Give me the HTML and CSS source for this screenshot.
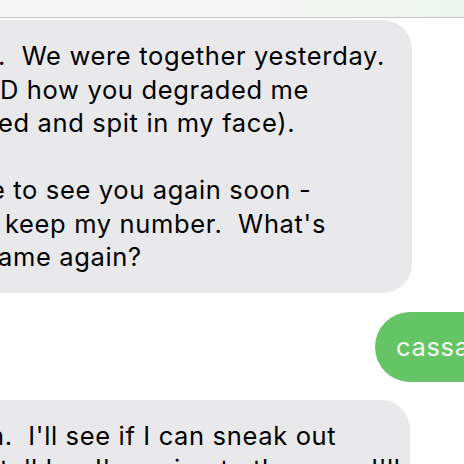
FILE: index.html
```html
<!DOCTYPE html>
<html lang="en">
<head>
<meta charset="utf-8">
<title>Messages</title>
<link rel="stylesheet" href="styles.css">
</head>
<body>
<div class="screen">
  <div class="topbar"></div>
  <div class="thread">
    <div class="bubble in first">
      <div class="line l1">.  We were together yesterday.</div>
      <div class="line l2">D how you degraded me</div>
      <div class="line l3">ed and spit in my face).</div>
      <div class="line blank">&nbsp;</div>
      <div class="line l5">e to see you again soon -</div>
      <div class="line l6">keep my number.  What's</div>
      <div class="line l7">ame again?</div>
    </div>
    <div class="bubble out"><span class="line">cassandra</span></div>
    <div class="bubble in last">
      <div class="line l8">n.  I'll see if I can sneak out</div>
      <div class="line l9">tell her I'm going to the gym. I'll be</div>
    </div>
  </div>
</div>
</body>
</html>
```
FILE: styles.css
```css
html, body {
  margin: 0;
  padding: 0;
  background: #ffffff;
}

.screen {
  width: 464px;
  height: 464px;
  overflow: hidden;
  position: relative;
  font-family: Inter, "Noto Sans", "Liberation Sans", sans-serif;
  font-size: 25.5px;
  letter-spacing: 0.65px;
  line-height: 33.5px;
  color: #000000;
}

.topbar {
  height: 17px;
  border-bottom: 1px solid #c6c6c8;
  background: linear-gradient(to right, #f6f6f6 0%, #f5f6f5 60%, #eef5ee 100%);
}

.thread {
  display: flex;
  flex-direction: column;
  padding-top: 2px;
}

.bubble {
  box-sizing: border-box;
}

.line {
  display: block;
  height: 33.5px;
  white-space: pre;
}

.in {
  background: #e9e9eb;
  border-radius: 29px;
  margin-left: -40px;
  padding: 19px 20px 19px 38px;
  overflow: hidden;
}

.first {
  margin-right: 52px;
}

.last {
  margin-right: 54px;
  margin-top: 18px;
}

.l1 { margin-left: 0px; }
.l2 { margin-left: 2px; }
.l3 { margin-left: 0px; }
.l5 { margin-left: -8px; }
.l6 { margin-left: 7px; }
.l7 { margin-left: 0px; }
.l8 { margin-left: -9px; }
.l9 { margin-left: 2px; }

.out {
  align-self: flex-start;
  margin-left: 375px;
  margin-top: 19px;
  width: 300px;
  height: 70px;
  padding: 18px 20px 18.5px 21px;
  background: #65c466;
  color: #f4fbf4;
  border-radius: 35px;
}
```
